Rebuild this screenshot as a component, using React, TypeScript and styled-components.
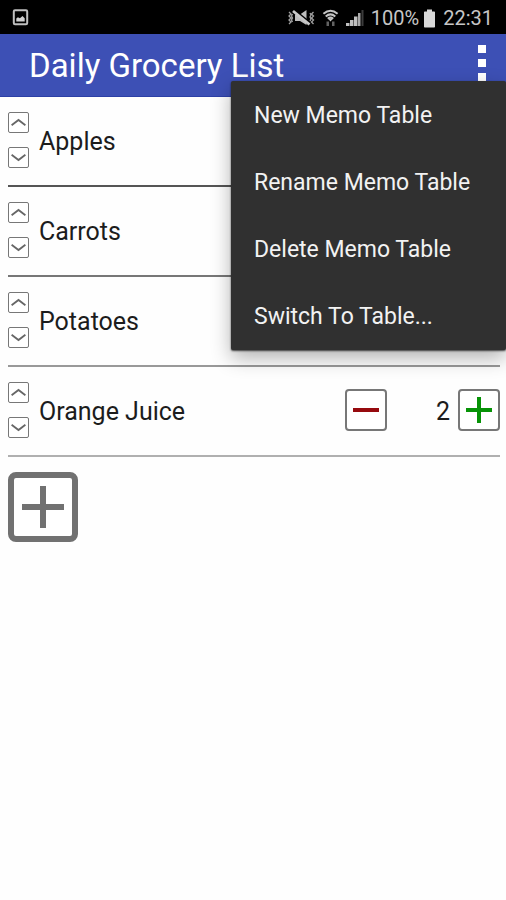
import React from "react";
import styled, { createGlobalStyle } from "styled-components";

const GlobalStyle = createGlobalStyle`
  *, *::before, *::after { box-sizing: border-box; }
  body {
    margin: 0;
    background: #fefefe;
    color: #1c1c1c;
    font-family: Roboto, "Liberation Sans", sans-serif;
  }
  button { font: inherit; color: inherit; cursor: pointer; padding: 0; }
  svg { display: block; }
`;

const Screen = styled.div`
  min-height: 100vh;
  display: flex;
  flex-direction: column;
`;

const StatusBar = styled.div`
  display: flex;
  align-items: center;
  justify-content: space-between;
  height: 34px;
  padding: 2px 13px 0 12px;
  background: #000;
  color: #c6c6c6;
  font-size: 20px;
  line-height: 24px;
`;

const StatusGroup = styled.div`
  display: flex;
  align-items: center;
  gap: 7px;
`;

const BatteryStatus = styled.span`
  display: flex;
  align-items: center;
  gap: 4px;
`;

const AppBar = styled.header`
  position: relative;
  z-index: 1;
  display: flex;
  align-items: center;
  justify-content: space-between;
  height: 63px;
  padding: 0 12px 0 29px;
  background: #3d50b5;
  border-bottom: 1px solid #2d40a6;
  color: #fff;
`;

const Title = styled.h1`
  margin: 0;
  padding-top: 2px;
  font-size: 33px;
  line-height: 40px;
  font-weight: 400;
`;

const OverflowButton = styled.button`
  align-self: flex-start;
  display: flex;
  flex-direction: column;
  align-items: center;
  gap: 6px;
  width: 24px;
  padding-top: 11px;
  border: 0;
  background: none;
`;

const Dot = styled.span`
  width: 8px;
  height: 8px;
  background: #fff;
`;

const Menu = styled.div`
  position: absolute;
  top: 47px;
  right: 0;
  display: grid;
  grid-auto-rows: 1fr;
  width: 275px;
  min-height: 269px;
  background: #303030;
  border-radius: 2px;
  box-shadow: 0 8px 20px rgba(0, 0, 0, 0.3), 0 1px 2px rgba(0, 0, 0, 0.7);
`;

const MenuItem = styled.button`
  width: 100%;
  padding: 2px 23px 0;
  border: 0;
  background: none;
  color: #f2f2f2;
  font-size: 23px;
  line-height: 28px;
  text-align: left;
  white-space: nowrap;
`;

const List = styled.ul`
  margin: 0;
  padding: 0 6px 0 8px;
  list-style: none;
`;

const Row = styled.li<{ $line: string }>`
  display: flex;
  align-items: center;
  gap: 10px;
  height: 90px;
  padding-bottom: 2px;
  border-bottom: 2px solid ${(p) => p.$line};
`;

const Reorder = styled.div`
  display: flex;
  flex-direction: column;
  gap: 14px;
`;

const ReorderButton = styled.button`
  display: grid;
  place-items: center;
  width: 21px;
  height: 21px;
  border: 1px solid #777;
  border-radius: 2px;
  background: #fff;
`;

const ItemName = styled.span`
  flex: 1;
  padding-top: 4px;
  font-size: 25px;
  line-height: 30px;
`;

const Stepper = styled.div`
  display: grid;
  grid-template-columns: 42px 63px 42px;
  align-items: center;
  column-gap: 4px;
`;

const StepButton = styled.button`
  display: grid;
  place-items: center;
  height: 42px;
  border: 2px solid #777;
  border-radius: 4px;
  background: #fff;
`;

const Quantity = styled.output`
  padding: 4px 4px 0 0;
  font-size: 25px;
  line-height: 30px;
  text-align: right;
`;

const AddButton = styled.button`
  display: grid;
  place-items: center;
  width: 70px;
  height: 70px;
  margin: 15px 8px;
  border: 6px solid #717171;
  border-radius: 8px;
  background: #fff;
`;

const Chevron = ({ up }: { up?: boolean }) => (
  <svg width="15" height="9" viewBox="0 0 15 9" fill="none" stroke="#666" strokeWidth="1.8" aria-hidden="true">
    <path d={up ? "M.6 7.2 7.5 2l6.9 5.2" : "M.6 1.8 7.5 7l6.9-5.2"} />
  </svg>
);

const Plus = ({ size, stroke, color }: { size: number; stroke: number; color: string }) => (
  <svg width={size} height={size} viewBox={`0 0 ${size} ${size}`} stroke={color} strokeWidth={stroke} aria-hidden="true">
    <path d={`M0 ${size / 2}H${size}M${size / 2} 0V${size}`} />
  </svg>
);

const Minus = () => (
  <svg width="26" height="4" viewBox="0 0 26 4" aria-hidden="true">
    <path d="M0 2H26" stroke="#960a0e" strokeWidth="4" />
  </svg>
);

const PictureIcon = () => (
  <svg width="17" height="18" viewBox="0 0 17 18" aria-hidden="true">
    <rect x="1.8" y="1.3" width="13.4" height="14" rx="1.2" fill="none" stroke="#c0c0c0" strokeWidth="2" />
    <path d="M4.3 12.5V9.5l1.6-1.2 2 1 2.6-2.2 2.2 2.2v3.2Z" fill="#d0d0d0" />
  </svg>
);

const MuteIcon = () => (
  <svg width="27" height="18" viewBox="0 0 27 18" aria-hidden="true">
    <path d="M7 5.5h5l6.500-4.500v15L12 12H7Z" fill="#bdbdbd" />
    <path d="M6 .8 22.5 14" stroke="#000" strokeWidth="2" />
    <path d="M5 2 21.5 15.5" stroke="#c8c8c8" strokeWidth="2.8" />
    <path
      d="m1 3 2 2-2 2 2 2-2 2 2 2-2 2M4.5 5l-1 2 1 2-1 2 1 2M25.5 3l-2 2 2 2-2 2 2 2-2 2 2 2M22 4l1 2-1 2 1 2-1 2"
      fill="none"
      stroke="#a0a0a0"
      strokeWidth="1.3"
    />
  </svg>
);

const WifiIcon = () => (
  <svg width="17" height="18" viewBox="0 0 17 18" aria-hidden="true">
    <path d="M1.4 4.8q7.1-6 14.2 0M3.7 7.4q4.8-4.1 9.6 0M5.8 9.8q2.7-2.4 5.4 0" fill="none" stroke="#c4c4c4" strokeWidth="2" />
    <path d="m8.5 12.6-2-2.4q2-1.6 4 0Z" fill="#c4c4c4" />
    <path d="M4.5 12.5h2.500v4.500H4.500ZM10 12.500h2.500v4.500H10Z" fill="#626262" />
  </svg>
);

const SignalIcon = () => (
  <svg width="18" height="18" viewBox="0 0 18 18" aria-hidden="true">
    <path d="M0 14h3.5v3H0ZM4 11h3.500v6H4ZM8 7.500h3.500V17H8Z" fill="#c0c0c0" />
    <path d="M12 4h2.5v13H12Z" fill="#aaa" />
    <path d="M15.5 1h2v16h-2Z" fill="#3c3c3c" />
  </svg>
);

const BatteryIcon = () => (
  <svg width="13" height="19" viewBox="0 0 13 19" aria-hidden="true">
    <path d="M4 .5h5v2h2.2q.8 0 .8.8v14.4q0 .8-.8.8H1.8q-.8 0-.8-.8V3.3q0-.8.8-.8H4Z" fill="#d8d8d8" />
  </svg>
);

const menuItems = ["New Memo Table", "Rename Memo Table", "Delete Memo Table", "Switch To Table..."];

const groceries = [
  { name: "Apples", quantity: 1, line: "#555" },
  { name: "Carrots", quantity: 1, line: "#777" },
  { name: "Potatoes", quantity: 1, line: "#999" },
  { name: "Orange Juice", quantity: 2, line: "#b0b0b0" },
];

export default function App() {
  return (
    <Screen>
      <GlobalStyle />
      <StatusBar>
        <PictureIcon />
        <StatusGroup>
          <MuteIcon />
          <WifiIcon />
          <SignalIcon />
          <BatteryStatus>
            100%
            <BatteryIcon />
          </BatteryStatus>
          <time>22:31</time>
        </StatusGroup>
      </StatusBar>
      <AppBar>
        <Title>Daily Grocery List</Title>
        <OverflowButton aria-label="More options" aria-haspopup="menu" aria-expanded="true">
          <Dot />
          <Dot />
          <Dot />
        </OverflowButton>
        <Menu role="menu">
          {menuItems.map((label) => (
            <MenuItem key={label} role="menuitem">
              {label}
            </MenuItem>
          ))}
        </Menu>
      </AppBar>
      <main>
        <List>
          {groceries.map(({ name, quantity, line }) => (
            <Row key={name} $line={line}>
              <Reorder>
                <ReorderButton aria-label={`Move ${name} up`}>
                  <Chevron up />
                </ReorderButton>
                <ReorderButton aria-label={`Move ${name} down`}>
                  <Chevron />
                </ReorderButton>
              </Reorder>
              <ItemName>{name}</ItemName>
              {quantity > 1 && (
                <Stepper>
                  <StepButton aria-label={`Fewer ${name}`}>
                    <Minus />
                  </StepButton>
                  <Quantity>{quantity}</Quantity>
                  <StepButton aria-label={`More ${name}`}>
                    <Plus size={26} stroke={4} color="#079307" />
                  </StepButton>
                </Stepper>
              )}
            </Row>
          ))}
        </List>
        <AddButton aria-label="Add item">
          <Plus size={42} stroke={6} color="#717171" />
        </AddButton>
      </main>
    </Screen>
  );
}
